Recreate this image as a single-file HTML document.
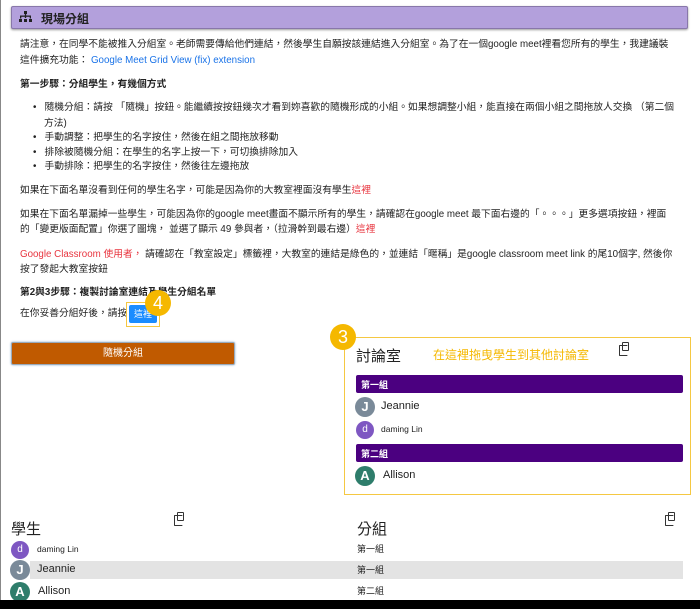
<!DOCTYPE html>
<html><head><meta charset="utf-8"><style>
*{margin:0;padding:0;box-sizing:border-box}
body{width:700px;height:609px;overflow:hidden;background:#fff;position:relative;font-family:"Liberation Sans","Noto Sans CJK TC",sans-serif;color:#222;font-size:10px}
.a{position:absolute;white-space:nowrap}
.t{font-size:9.75px;line-height:14px}
.b{font-weight:bold}
.red{color:#e8353f}
.blue{color:#1a73e8}
.bar{position:absolute;left:356px;width:327px;height:18px;background:#4b0080;border-radius:2px;color:#fff;font-size:9px;font-weight:bold;padding:3px 5px}
.av{position:absolute;border-radius:50%;color:#fff;text-align:center;font-weight:bold}
.copy{position:absolute;width:7px;height:9px;border:1.3px solid #333;border-radius:1px;background:#fff}
.copy:before{content:"";position:absolute;left:-4px;top:2px;width:7px;height:9px;border:1.3px solid #333;border-radius:1px;border-right-color:transparent;border-top-color:#333}
</style></head><body>
<div class="a" style="left:0;top:0;width:1px;height:600px;background:#888"></div>
<div class="a" style="left:11px;top:6px;width:677px;height:23px;background:#b3a0dc;border:1px solid #8877aa;border-radius:2px;box-shadow:0 1px 2px #999"></div>
<svg class="a" style="left:19px;top:11px" width="13" height="12" viewBox="0 0 13 12"><rect x="5" y="0" width="3" height="3" fill="#222"/><rect x="1" y="4.5" width="11" height="1.3" fill="#222"/><rect x="1" y="4.5" width="1.3" height="3" fill="#222"/><rect x="5.85" y="3" width="1.3" height="4" fill="#222"/><rect x="10.7" y="4.5" width="1.3" height="3" fill="#222"/><rect x="0" y="8" width="3" height="3" fill="#222"/><rect x="5" y="8" width="3" height="3" fill="#222"/><rect x="10" y="8" width="3" height="3" fill="#222"/></svg>
<div class="a b" style="left:41px;top:10px;font-size:12px">現場分組</div>

<div class="a t" style="left:20px;top:38px">請注意，在同學不能被推入分組室。老師需要傳給他們連結，然後學生自願按該連結進入分組室。為了在一個google meet裡看您所有的學生，我建議裝</div>
<div class="a t" style="left:20px;top:54px">這件擴充功能： <span class="blue">Google Meet Grid View (fix) extension</span></div>
<div class="a t b" style="left:20px;top:78px">第一步驟：分組學生，有幾個方式</div>
<div class="a t" style="left:33px;top:101px">•&nbsp;&nbsp; 隨機分組：請按 「隨機」按鈕。能繼續按按鈕幾次才看到妳喜歡的隨機形成的小組。如果想調整小組，能直接在兩個小組之間拖放人交換 （第二個</div>
<div class="a t" style="left:44px;top:117px">方法)</div>
<div class="a t" style="left:33px;top:131px">•&nbsp;&nbsp; 手動調整：把學生的名字按住，然後在組之間拖放移動</div>
<div class="a t" style="left:33px;top:146px">•&nbsp;&nbsp; 排除被隨機分組：在學生的名字上按一下，可切換排除加入</div>
<div class="a t" style="left:33px;top:160px">•&nbsp;&nbsp; 手動排除：把學生的名字按住，然後往左邊拖放</div>
<div class="a t" style="left:20px;top:184px">如果在下面名單沒看到任何的學生名字，可能是因為你的大教室裡面沒有學生<span class="red">這裡</span></div>
<div class="a t" style="left:20px;top:208px">如果在下面名單漏掉一些學生，可能因為你的google meet畫面不顯示所有的學生，請確認在google meet 最下面右邊的「。。。」更多選項按鈕，裡面</div>
<div class="a t" style="left:20px;top:223px">的「變更版面配置」你選了圖塊， 並選了顯示 49 參與者，（拉滑幹到最右邊）<span class="red">這裡</span></div>
<div class="a t" style="left:20px;top:248px"><span class="red">Google Classroom 使用者，</span> 請確認在「教室設定」標籤裡，大教室的連結是綠色的，並連結「暱稱」是google classroom meet link 的尾10個字, 然後你</div>
<div class="a t" style="left:20px;top:263px">按了發起大教室按鈕</div>
<div class="a t b" style="left:20px;top:286px">第2與3步驟：複製討論室連結及學生分組名單</div>
<div class="a t" style="left:20px;top:307px">在你妥善分組好後，請按</div>
<div class="a" style="left:126px;top:302px;width:34px;height:25px;border:1.5px solid #f5c842"></div>
<div class="a" style="left:129px;top:305px;width:28px;height:18px;background:#1a8cff;border-radius:2px;color:#fff;font-size:9px;text-align:center;line-height:18px">這裡</div>
<div class="a" style="left:145px;top:290px;width:26px;height:26px;border-radius:50%;background:#f5b800;color:#fff;font-size:18px;text-align:center;line-height:26px">4</div>

<div class="a" style="left:11px;top:342px;width:224px;height:23px;background:#c05a00;border:1px solid #9ab;border-radius:2px;box-shadow:0 0 2px #8ac;color:#fff;font-size:10px;text-align:center;line-height:21px">隨機分組</div>

<div class="a" style="left:344px;top:337px;width:347px;height:158px;border:1.5px solid #f5c842"></div>
<div class="a" style="left:330px;top:324px;width:26px;height:26px;border-radius:50%;background:#f5b800;color:#fff;font-size:18px;text-align:center;line-height:26px">3</div>
<div class="a" style="left:356px;top:345px;font-size:15px;color:#222">討論室</div>
<div class="a" style="left:433px;top:346px;font-size:12px;color:#f5b800">在這裡拖曳學生到其他討論室</div>
<div class="copy" style="left:622px;top:342px"></div>
<div class="bar" style="top:375px">第一組</div>
<div class="av" style="left:355px;top:397px;width:20px;height:20px;background:#7a8a99;font-size:13px;line-height:20px">J</div>
<div class="a" style="left:381px;top:400px;font-size:11px">Jeannie</div>
<div class="av" style="left:356px;top:421px;width:18px;height:18px;background:#7e57c2;font-size:10px;line-height:18px;font-weight:normal">d</div>
<div class="a" style="left:381px;top:424px;font-size:8.5px">daming Lin</div>
<div class="bar" style="top:444px">第二組</div>
<div class="av" style="left:355px;top:466px;width:20px;height:20px;background:#2e7d6b;font-size:13px;line-height:20px">A</div>
<div class="a" style="left:383px;top:469px;font-size:11px">Allison</div>

<div class="a" style="left:11px;top:518px;font-size:15px">學生</div>
<div class="copy" style="left:177px;top:512px"></div>
<div class="av" style="left:11px;top:541px;width:18px;height:18px;background:#7e57c2;font-size:10px;line-height:18px;font-weight:normal">d</div>
<div class="a" style="left:37px;top:544px;font-size:8.5px">daming Lin</div>
<div class="a" style="left:30px;top:561px;width:320px;height:18px;background:#e3e3e3"></div>
<div class="av" style="left:10px;top:560px;width:20px;height:20px;background:#7a8a99;font-size:13px;line-height:20px">J</div>
<div class="a" style="left:37px;top:563px;font-size:11px">Jeannie</div>
<div class="av" style="left:10px;top:582px;width:20px;height:20px;background:#2e7d6b;font-size:13px;line-height:20px">A</div>
<div class="a" style="left:38px;top:585px;font-size:11px">Allison</div>

<div class="a" style="left:357px;top:518px;font-size:15px">分組</div>
<div class="copy" style="left:668px;top:512px"></div>
<div class="a" style="left:357px;top:542px;font-size:9px">第一組</div>
<div class="a" style="left:330px;top:561px;width:353px;height:18px;background:#e3e3e3"></div>
<div class="a" style="left:357px;top:563px;font-size:9px">第一組</div>
<div class="a" style="left:357px;top:584px;font-size:9px">第二組</div>
<div class="a" style="left:0;top:600px;width:700px;height:9px;background:#000"></div>
</body></html>
